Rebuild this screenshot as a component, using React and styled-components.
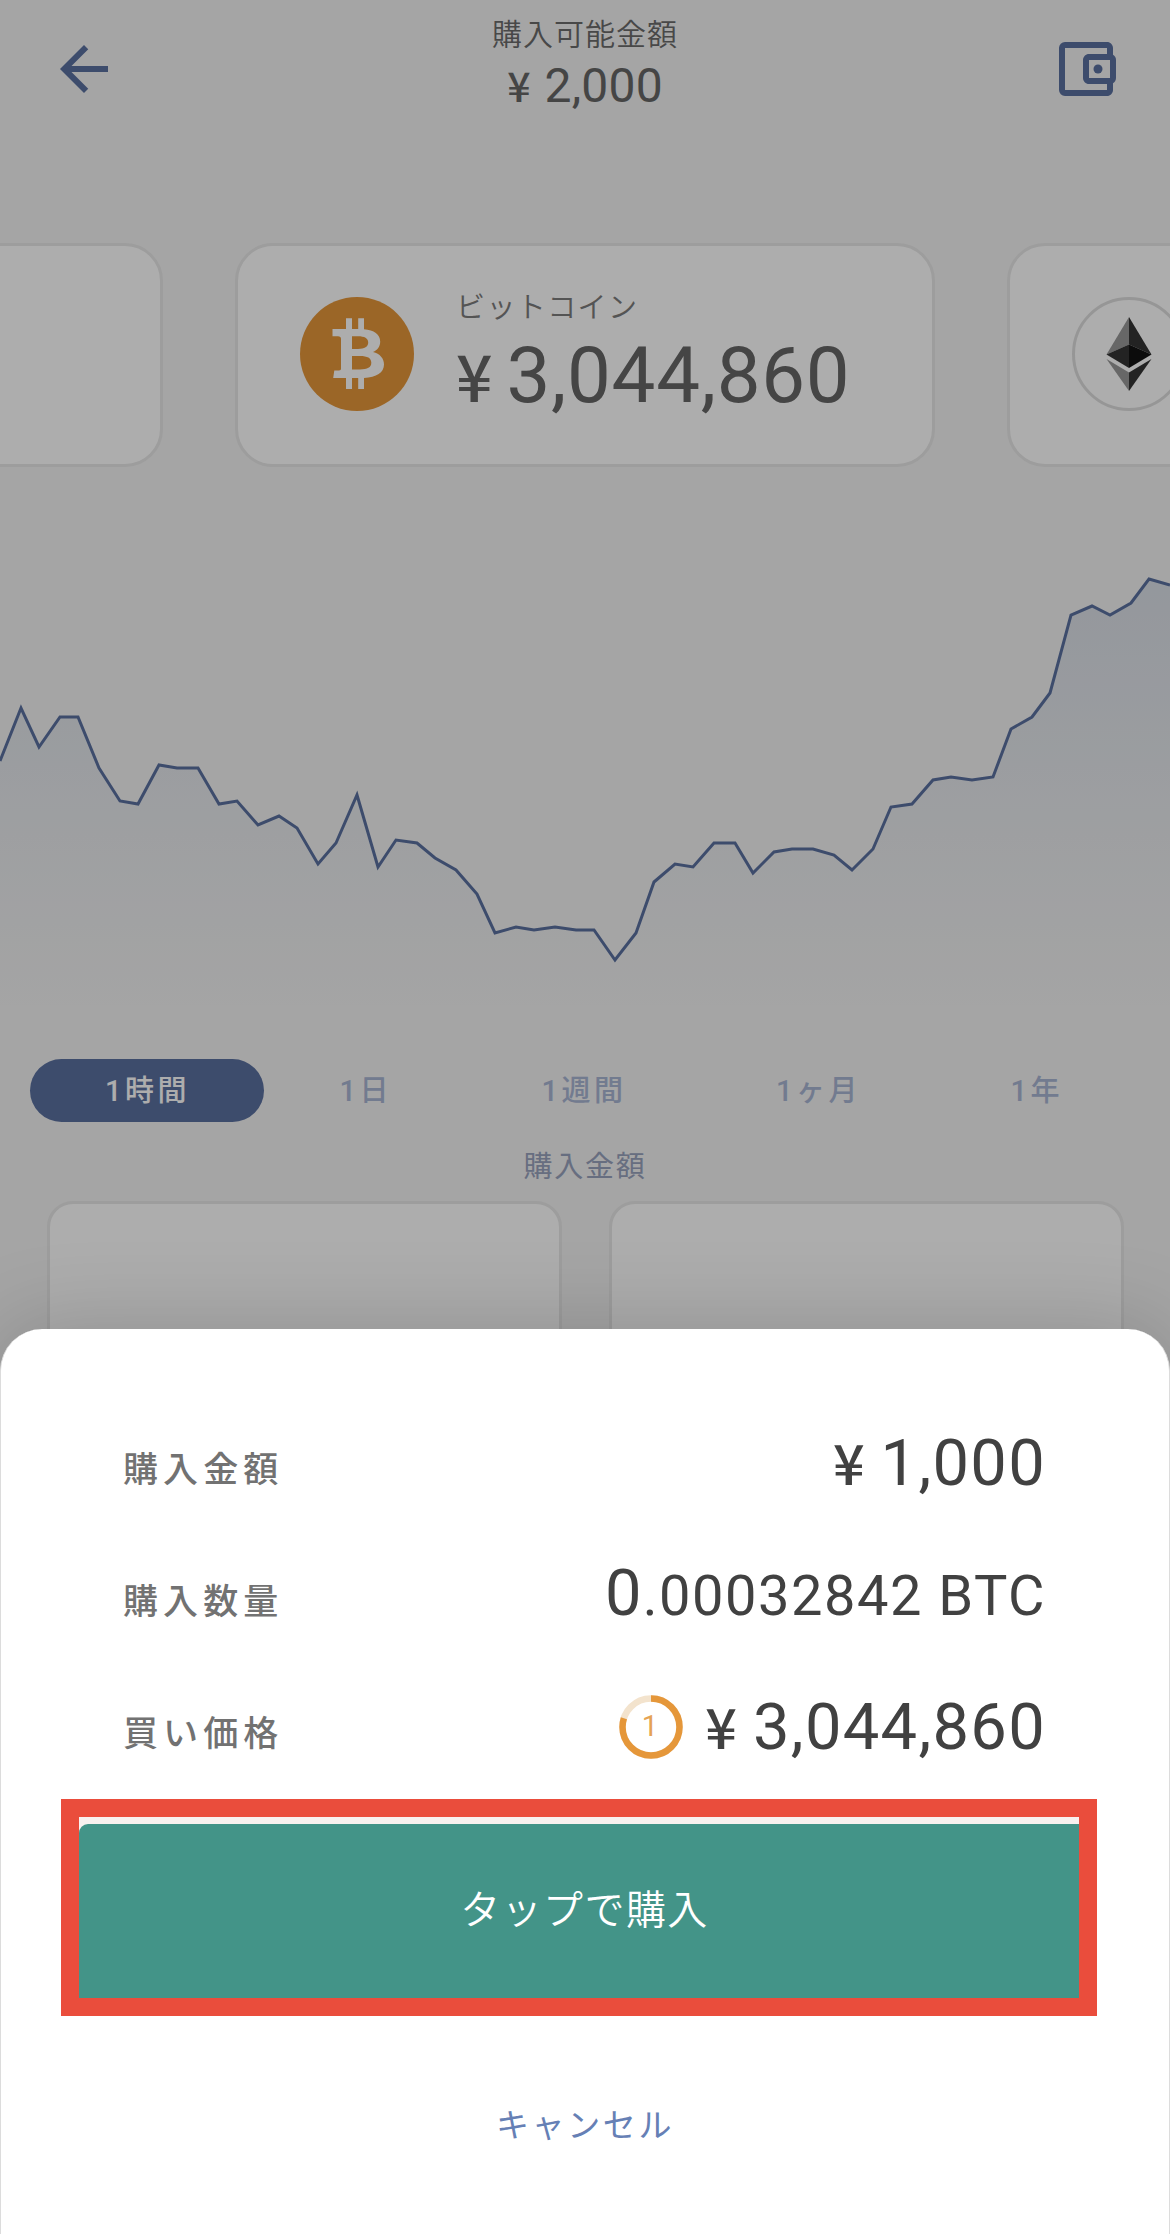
import React from 'react'
import styled, { createGlobalStyle } from 'styled-components';

const GlobalStyle = createGlobalStyle`
* {
    box-sizing: border-box;
}
body {
    margin: 0;
    background-color: #f3f3f3;
}
`;

const Screen = styled.div`
position: relative;
width: 1170px;
height: 2234px;
overflow: hidden;
background-color: #f3f3f3;
font-family: Roboto, "Noto Sans CJK JP", sans-serif;
white-space: nowrap;
`;

const Header = styled.header`
display: flex;
justify-content: space-between;
align-items: flex-start;
height: 243px;
padding: 0 48px;
`;

const IconButton = styled.div`
width: 72px;
height: 72px;
margin-top: 33px;
color: #5a70a0;

    svg {
        display: block;
        width: 100%;
        height: 100%;
    }
`;

const Balance = styled.div`
display: flex;
flex-direction: column;
align-items: center;
padding-top: 13px;
`;

const BalanceLabel = styled.span`
font-size: 30px;
font-weight: 350;
line-height: 44px;
letter-spacing: 1px;
color: #6a6a6a;
`;

const Price = styled.span`
display: flex;
align-items: baseline;
font-size: ${({ $size }) => $size}px;
line-height: ${({ $line }) => $line}px;
letter-spacing: ${({ $spacing }) => $spacing}px;
color: ${({ $color }) => $color || '#414141'};
`;

const Yen = styled.span`
font-family: "Noto Sans CJK JP", sans-serif;
font-size: ${({ $size }) => $size}px;
font-weight: 500;
line-height: 1;
letter-spacing: 0;
margin-right: ${({ $gap }) => $gap}px;
`;

const Carousel = styled.div`
display: flex;
justify-content: center;
gap: 72px;
height: 224px;
`;

const CoinCard = styled.div`
display: flex;
align-items: center;
flex: none;
width: 700px;
padding: 0 0 2px 62px;
background-color: #fff;
border: 3px solid #e7e7e7;
border-radius: 38px;
`;

const CoinIcon = styled.svg`
flex: none;
width: 114px;
height: 114px;
`;

const CoinInfo = styled.div`
display: flex;
flex-direction: column;
margin-left: 42px;
`;

const CoinName = styled.span`
font-size: 29px;
font-weight: 350;
line-height: 44px;
letter-spacing: 1.4px;
color: #7c7c7c;
`;

const Chart = styled.svg`
display: block;
width: 1170px;
height: 592px;
`;

const Tabs = styled.div`
display: flex;
height: 63px;
padding-left: 30px;
`;

const Tab = styled.div`
height: 63px;
padding: 0 74.5px 0 75px;
border-radius: 32px;
font-size: 29px;
font-weight: 500;
line-height: 64px;
letter-spacing: 3.5px;
color: ${({ $active }) => ($active ? '#fff' : '#a9b5d3')};
background-color: ${({ $active }) => ($active ? '#5a70a0' : 'transparent')};
`;

const Caption = styled.div`
margin-top: 23px;
font-size: 29px;
line-height: 44px;
letter-spacing: 1.7px;
text-align: center;
color: #98a2bd;
`;

const AmountGrid = styled.div`
display: flex;
justify-content: space-between;
margin-top: 12px;
padding: 0 46px 0 47px;
`;

const AmountCard = styled.div`
width: 515px;
height: 240px;
background-color: #fff;
border: 3px solid #e7e7e7;
border-radius: 26px;
`;

const Backdrop = styled.div`
position: absolute;
inset: 0;
background-color: rgba(0, 0, 0, 0.32);
`;

const Sheet = styled.section`
position: absolute;
left: 0;
right: 0;
bottom: 0;
height: 905px;
padding-top: 71px;
background-color: #fff;
border: solid #dcdcdc;
border-width: 0 1px;
border-radius: 42px 42px 0 0;
box-shadow: 0 0 90px rgba(0, 0, 0, 0.18);
`;

const Row = styled.div`
display: flex;
justify-content: space-between;
align-items: center;
height: 132px;
padding: 0 123px 0 122px;
`;

const RowLabel = styled.span`
font-size: 35px;
font-weight: 500;
letter-spacing: 5.1px;
color: #727272;
`;

const RowValue = styled.div`
display: flex;
align-items: center;
padding-bottom: 7px;
`;

const Small = styled.span`
font-size: 56px;
letter-spacing: 1.5px;
`;

const Countdown = styled.svg`
width: 64px;
height: 64px;
margin: 1px 22px 0 0;
`;

const Highlight = styled.div`
width: 1036px;
height: 217px;
margin: 3px 0 0 60px;
padding-top: 7px;
background-color: #f8f1ef;
border: 18px solid #ea4d3c;
`;

const BuyButton = styled.button`
display: block;
width: 100%;
height: 174px;
padding: 0 0 8px 11px;
border: none;
border-radius: 9px 0 0 0;
background-color: #439488;
color: #fff;
font-family: inherit;
font-size: 40px;
font-weight: 350;
letter-spacing: 1.4px;
cursor: pointer;
`;

const CancelButton = styled.button`
display: block;
width: 100%;
height: 60px;
margin-top: 77px;
padding: 0;
border: none;
background: none;
color: #6680b5;
font-family: inherit;
font-size: 33px;
font-weight: 400;
letter-spacing: 2.6px;
cursor: pointer;
`;

const points = [
    [0, 761], [21, 708], [39, 747], [60, 717], [78, 717], [99, 768], [120, 801], [138, 804],
    [159, 765], [177, 768], [198, 768], [219, 804], [237, 801], [258, 825], [279, 816], [297, 828],
    [318, 864], [336, 843], [357, 795], [378, 867], [396, 840], [417, 843], [435, 858], [456, 870],
    [477, 894], [495, 933], [516, 927], [534, 930], [555, 927], [576, 930], [594, 930], [615, 960],
    [636, 933], [654, 882], [675, 864], [693, 867], [714, 843], [735, 843], [753, 873], [774, 852],
    [792, 849], [813, 849], [834, 855], [852, 870], [873, 849], [891, 807], [912, 804], [933, 780],
    [951, 777], [972, 780], [993, 777], [1011, 729], [1032, 717], [1050, 693], [1071, 615], [1092, 606],
    [1110, 615], [1131, 603], [1149, 579], [1170, 585],
];
const line = points.map((p) => p.join(',')).join(' ');

const tabs = ['1時間', '1日', '1週間', '1ヶ月', '1年'];

const BackIcon = () => (
    <svg viewBox="0 0 24 24" fill="currentColor">
        <path d="M20 11H7.83l5.59-5.59L12 4l-8 8 8 8 1.41-1.41L7.83 13H20v-2z" />
    </svg>
)

const WalletIcon = () => (
    <svg viewBox="0 0 24 24" fill="currentColor">
        <path d="M21 7.28V5c0-1.1-.9-2-2-2H5a2 2 0 0 0-2 2v14a2 2 0 0 0 2 2h14c1.1 0 2-.9 2-2v-2.28A2 2 0 0 0 22 15V9a2 2 0 0 0-1-1.72zM20 9v6h-7V9h7zM5 19V5h14v2h-6c-1.1 0-2 .9-2 2v6c0 1.1.9 2 2 2h6v2H5z" />
        <circle cx="16" cy="12" r="1.5" />
    </svg>
)

const Bitcoin = () => (
    <CoinIcon viewBox="0 0 114 114">
        <circle cx="57" cy="57" r="57" fill="#e5973a" />
        <path
            fill="#fff"
            fillRule="evenodd"
            d="M32.500 32H46V21.300H52V32H58.200V21.300H64V32.300C74 33 80.200 37.500 80.200 44.500C80.200 49.500 77.500 53.300 73 55C80 56.700 84 61.500 84 67.500C84 75.500 76.500 80.500 64 81V92H58.200V81H52V92H46V81H33.200L34.300 73.500H39C40.500 73.500 41 72.800 41 71.500V42C41 40.200 40 39.300 38 39.300H32.500ZM52 39.300V52H58C64.500 52 68.200 50 68.200 45.600C68.200 41.300 64.500 39.300 58 39.300ZM52 59V72.500H60C67.500 72.500 71.300 70.500 71.300 65.800C71.300 61 67.500 59 60 59Z"
        />
    </CoinIcon>
)

const Ethereum = () => (
    <CoinIcon viewBox="0 0 114 114">
        <circle cx="57" cy="57" r="55.500" fill="none" stroke="#dedede" strokeWidth="3" />
        <path fill="#989898" d="M57 20L34.500 57.500L57 47.500Z" />
        <path fill="#343434" d="M57 20L79.500 57.500L57 47.500Z" />
        <path fill="#343434" d="M34.500 57.500L57 47.500V71Z" />
        <path fill="#131313" d="M79.500 57.500L57 47.500V71Z" />
        <path fill="#989898" d="M34.500 62L57 75.500V94Z" />
        <path fill="#343434" d="M79.500 62L57 75.500V94Z" />
    </CoinIcon>
)

const App = () => {
    return (
        <Screen>
            <GlobalStyle />
            <Header>
                <IconButton><BackIcon /></IconButton>
                <Balance>
                    <BalanceLabel>購入可能金額</BalanceLabel>
                    <Price $size={48} $line={58} $spacing={0.2} $color="#666">
                        <Yen $size={41} $gap={14}>¥</Yen>2,000
                    </Price>
                </Balance>
                <IconButton><WalletIcon /></IconButton>
            </Header>
            <Carousel>
                <CoinCard />
                <CoinCard>
                    <Bitcoin />
                    <CoinInfo>
                        <CoinName>ビットコイン</CoinName>
                        <Price $size={78} $line={92} $spacing={0.7} $color="#666">
                            <Yen $size={64} $gap={14}>¥</Yen>3,044,860
                        </Price>
                    </CoinInfo>
                </CoinCard>
                <CoinCard><Ethereum /></CoinCard>
            </Carousel>
            <Chart viewBox="0 467 1170 592">
                <defs>
                    <linearGradient id="area" gradientUnits="userSpaceOnUse" x1="0" y1="579" x2="0" y2="1010">
                        <stop offset="0" stopColor="#6a86b0" stopOpacity="0.18" />
                        <stop offset="1" stopColor="#6a86b0" stopOpacity="0" />
                    </linearGradient>
                </defs>
                <polygon points={`0,1010 ${line} 1170,1010`} fill="url(#area)" />
                <polyline points={line} fill="none" stroke="#5a70a0" strokeWidth="3" />
            </Chart>
            <Tabs>
                {tabs.map((name, i) => (
                    <Tab key={name} $active={i === 0}>{name}</Tab>
                ))}
            </Tabs>
            <Caption>購入金額</Caption>
            <AmountGrid>
                <AmountCard />
                <AmountCard />
            </AmountGrid>
            <Backdrop />
            <Sheet>
                <Row>
                    <RowLabel>購入金額</RowLabel>
                    <RowValue>
                        <Price $size={65} $line={76} $spacing={1.3}>
                            <Yen $size={55.5} $gap={16}>¥</Yen>1,000
                        </Price>
                    </RowValue>
                </Row>
                <Row>
                    <RowLabel>購入数量</RowLabel>
                    <RowValue>
                        <Price $size={65} $line={76} $spacing={1.3}>
                            0<Small>.00032842 BTC</Small>
                        </Price>
                    </RowValue>
                </Row>
                <Row>
                    <RowLabel>買い価格</RowLabel>
                    <RowValue>
                        <Countdown viewBox="0 0 64 64">
                            <circle cx="32" cy="32" r="28.500" fill="none" stroke="#f3e3cd" strokeWidth="6.500" />
                            <circle
                                cx="32"
                                cy="32"
                                r="28.500"
                                fill="none"
                                stroke="#e5973a"
                                strokeWidth="6.500"
                                pathLength="100"
                                strokeDasharray="80 100"
                                transform="rotate(-90 32 32)"
                            />
                            <text x="31" y="40.500" fontSize="29" textAnchor="middle" fill="#e5a354">1</text>
                        </Countdown>
                        <Price $size={65} $line={76} $spacing={1.3}>
                            <Yen $size={55.5} $gap={16}>¥</Yen>3,044,860
                        </Price>
                    </RowValue>
                </Row>
                <Highlight>
                    <BuyButton>タップで購入</BuyButton>
                </Highlight>
                <CancelButton>キャンセル</CancelButton>
            </Sheet>
        </Screen>
    )
}

export default App
